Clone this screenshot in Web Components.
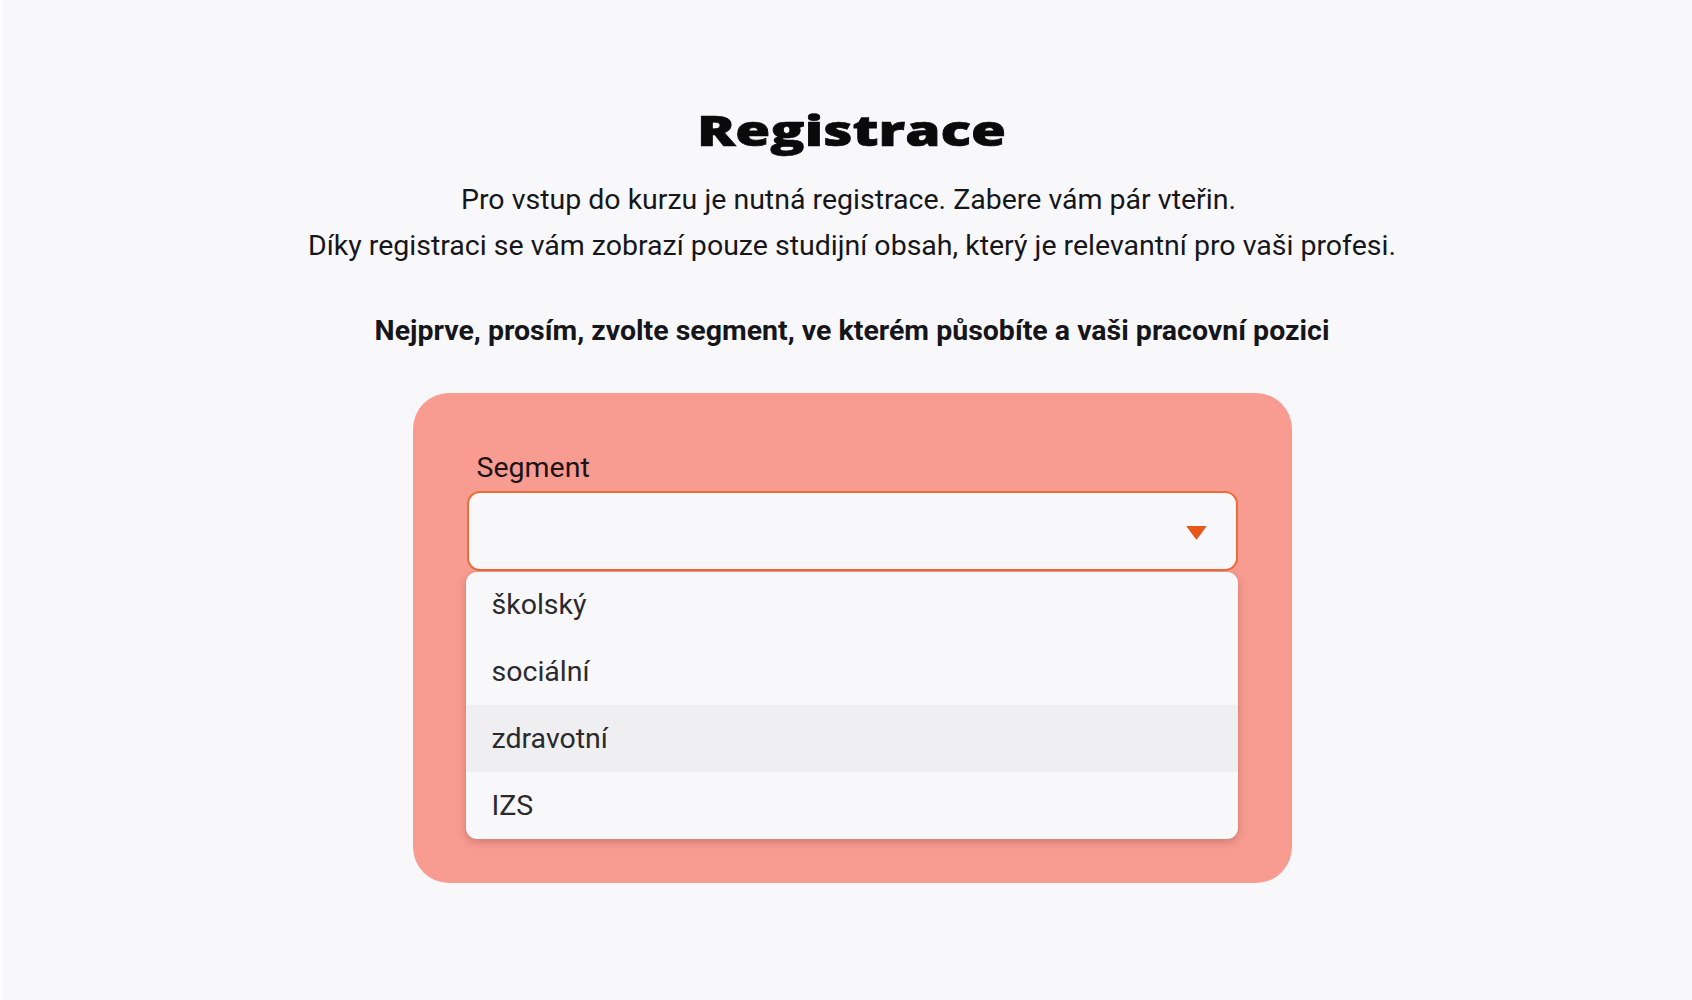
<!DOCTYPE html>
<html lang="cs">
<head>
<meta charset="utf-8">
<title>Registrace</title>
<style>
  html, body { margin: 0; height: 100%; background: #ffffff; }
</style>
</head>
<body>
<reg-page>
  <span slot="title">Registrace</span>
  <span slot="intro">Pro vstup do kurzu je nutná registrace. Zabere vám pár vteřin.&nbsp;<br>Díky registraci se vám zobrazí pouze studijní obsah, který je relevantní pro vaši profesi.</span>
  <span slot="lead">Nejprve, prosím, zvolte segment, ve kterém působíte a vaši pracovní pozici</span>
  <reg-panel>
    <reg-select label="Segment">
      <reg-option>školský</reg-option>
      <reg-option>sociální</reg-option>
      <reg-option active>zdravotní</reg-option>
      <reg-option>IZS</reg-option>
    </reg-select>
  </reg-panel>
</reg-page>

<script>
// page frame with the heading block on top
class RegPage extends HTMLElement {
  constructor() {
    super();
    const shadow = this.attachShadow({ mode: 'open' });
    shadow.innerHTML = `
      <style>
        :host {
          display: flex;
          flex-direction: column;
          align-items: center;
          box-sizing: border-box;
          height: 1000px;
          margin-left: 2px;
          padding: 98px 0 0 10px;
          background: #f8f8fb;
          color: #16161a;
          font-family: Roboto, "Liberation Sans", sans-serif;
        }
        .title {
          display: block;
          height: 64px;
          margin: 0;
          font-family: "Open Sans", "Liberation Sans", sans-serif;
          font-size: 42px;
          font-weight: 800;
          line-height: 64px;
          color: #0a0a0a;
          -webkit-text-stroke: 0.7px #0a0a0a;
          transform: scaleX(1.35);
        }
        .intro {
          margin: 15px 0 0;
          font-size: 28.5px;
          line-height: 46px;
          text-align: center;
        }
        .lead {
          margin: 39px 0 0;
          font-size: 28.5px;
          font-weight: 700;
          line-height: 45px;
          text-align: center;
        }
      </style>
      <h1 class="title"><slot name="title"></slot></h1>
      <p class="intro"><slot name="intro"></slot></p>
      <p class="lead"><slot name="lead"></slot></p>
      <slot></slot>
    `;
  }
}

class RegPanel extends HTMLElement {
  constructor() {
    super();
    const shadow = this.attachShadow({ mode: 'open' });
    shadow.innerHTML = `
      <style>
        :host {
          display: block;
          box-sizing: border-box;
          width: 879px;
          margin-top: 40px;
          padding: 52px 54px 44px;
          background: #f89c92;
          border-radius: 36px;
        }
      </style>
      <slot></slot>
    `;
  }
}

class RegSelect extends HTMLElement {
  constructor() {
    super();
    const shadow = this.attachShadow({ mode: 'open' });
    shadow.innerHTML = `
      <style>
        :host { display: block; }
        .label {
          display: block;
          padding-left: 10px;
          font-size: 28.5px;
          line-height: 46px;
          color: #1c1418;
        }
        .field {
          display: flex;
          align-items: center;
          justify-content: flex-end;
          box-sizing: border-box;
          height: 80px;
          padding-right: 29px;
          background: #f8f8fb;
          border: 2px solid #ec6c36;
          border-radius: 13px;
        }
        .field svg { display: block; margin-top: 3px; }
        .menu {
          margin: 1px -0.5px 0;
          background: #f8f8fb;
          border-radius: 11px;
          overflow: hidden;
          box-shadow: 0 3px 8px rgba(110, 40, 30, 0.3);
        }
      </style>
      <span class="label"></span>
      <div class="field">
        <svg width="21" height="14" viewBox="0 0 21 14"><path d="M1 0H20Q20.8 0 20.3 .8L11.2 13Q10.5 14 9.8 13L.7 .8Q.2 0 1 0Z" fill="#e8581c"/></svg>
      </div>
      <div class="menu"><slot></slot></div>
    `;
    shadow.querySelector('.label').textContent = this.getAttribute('label');
  }
}

class RegOption extends HTMLElement {
  constructor() {
    super();
    const shadow = this.attachShadow({ mode: 'open' });
    shadow.innerHTML = `
      <style>
        :host {
          display: block;
          height: 67px;
          padding-left: 25.5px;
          font-size: 28.5px;
          line-height: 67px;
          color: #2a2a2e;
        }
        :host(:first-child) { height: 66px; line-height: 65px; }
        :host([active]) { background: #efeff2; }
      </style>
      <slot></slot>
    `;
  }
}

customElements.define('reg-page', RegPage);
customElements.define('reg-panel', RegPanel);
customElements.define('reg-select', RegSelect);
customElements.define('reg-option', RegOption);
</script>
</body>
</html>
